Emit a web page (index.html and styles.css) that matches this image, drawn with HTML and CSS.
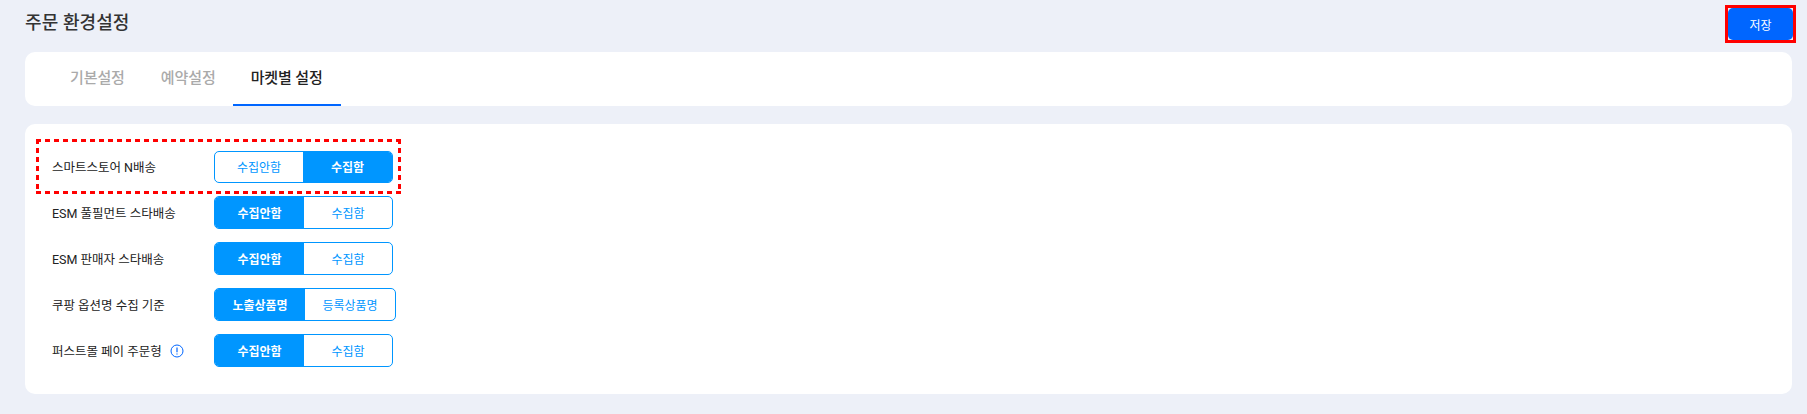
FILE: index.html
```html
<!DOCTYPE html>
<html>
<head>
    <title>주문 환경설정</title>
    <link rel="stylesheet" href="styles.css">
</head>
<body>
    <div class="page-head">
        <h1>주문 환경설정</h1>
        <div class="save-outline">
            <button class="button save">저장</button>
        </div>
    </div>
    <div class="card tabs">
        <a class="tab">기본설정</a>
        <a class="tab">예약설정</a>
        <a class="tab active">마켓별 설정</a>
    </div>
    <div class="card settings">
        <div class="row row-marked">
            <div class="row-label">스마트스토어 N배송</div>
            <div class="toggle first-on-right">
                <span class="opt">수집안함</span>
                <span class="opt on">수집함</span>
            </div>
        </div>
        <div class="row">
            <div class="row-label">ESM 풀필먼트 스타배송</div>
            <div class="toggle">
                <span class="opt on">수집안함</span>
                <span class="opt">수집함</span>
            </div>
        </div>
        <div class="row">
            <div class="row-label">ESM 판매자 스타배송</div>
            <div class="toggle">
                <span class="opt on">수집안함</span>
                <span class="opt">수집함</span>
            </div>
        </div>
        <div class="row">
            <div class="row-label">쿠팡 옵션명 수집 기준</div>
            <div class="toggle wide">
                <span class="opt on">노출상품명</span>
                <span class="opt">등록상품명</span>
            </div>
        </div>
        <div class="row">
            <div class="row-label">퍼스트몰 페이 주문형
                <svg class="info" width="14" height="14" viewBox="0 0 14 14">
                    <circle cx="7" cy="7" r="6" fill="none" stroke="#0066ff" stroke-width="1"/>
                    <path d="M7 3.6v4.6M7 9.4v1.1" fill="none" stroke="#0066ff" stroke-width="1.2"/>
                </svg>
            </div>
            <div class="toggle">
                <span class="opt on">수집안함</span>
                <span class="opt">수집함</span>
            </div>
        </div>
    </div>
</body>
</html>
```

FILE: styles.css
```css
body {
    font-family: Roboto, "Noto Sans CJK KR", sans-serif;
    margin: 0;
    height: 414px;
    overflow: hidden;
    background-color: #edf0f8;
    color: #222;
}
.page-head {
    display: flex;
    justify-content: space-between;
    align-items: flex-start;
    box-sizing: border-box;
    height: 52px;
    padding: 5px 11px 0 25px;
}
h1 {
    margin: 4px 0 0;
    font-size: 18px;
    font-weight: 500;
    line-height: 28px;
    letter-spacing: 0.1px;
    color: #333;
}
.save-outline {
    border: 3px solid #ff0000;
    line-height: 0;
}
.button {
    width: 65px;
    height: 32px;
    border: none;
    border-radius: 5px;
    font-family: inherit;
    font-size: 12px;
    cursor: pointer;
}
.save {
    background-color: #0066ff;
    color: white;
}
.card {
    background-color: white;
    border-radius: 10px;
    margin: 0 15px 0 25px;
}
.tabs {
    display: flex;
    height: 54px;
    padding-left: 45px;
    margin-bottom: 18px;
    box-sizing: border-box;
}
.tab {
    font-size: 15px;
    font-weight: 500;
    line-height: 52px;
    letter-spacing: -0.1px;
    color: #aaa;
    margin-right: 36px;
}
.tab.active {
    color: #222;
    margin-left: -19px;
    padding: 0 18px;
    border-bottom: 2px solid #0066ff;
    height: 52px;
}
.settings {
    height: 270px;
    padding-top: 15px;
    box-sizing: border-box;
}
.row {
    display: flex;
    align-items: center;
    height: 33px;
    margin: 0 0 13px 27px;
    font-size: 12.5px;
}
.row-marked {
    width: 365px;
    height: 55px;
    margin: 0 0 2px 11px;
    padding-left: 16px;
    box-sizing: border-box;
    background-image:
        repeating-linear-gradient(90deg, #ff0000 0 5px, transparent 5px 9px),
        repeating-linear-gradient(90deg, #ff0000 0 5px, transparent 5px 9px),
        repeating-linear-gradient(180deg, #ff0000 0 5px, transparent 5px 9px),
        repeating-linear-gradient(180deg, #ff0000 0 5px, transparent 5px 9px);
    background-size: 100% 3px, 100% 3px, 3px 100%, 3px 100%;
    background-position: 0 0, 0 100%, 0 0, 100% 0;
    background-repeat: no-repeat;
}
.row-label {
    width: 162px;
    display: flex;
    align-items: center;
    gap: 8px;
}
.info {
    flex: none;
}
.toggle {
    display: grid;
    grid-template-columns: 89px 88px;
    width: 179px;
    height: 33px;
    box-sizing: border-box;
    border: 1px solid #0096ff;
    border-radius: 5px;
    overflow: hidden;
    font-size: 12px;
}
.row-marked .toggle {
    height: 32px;
}
.first-on-right {
    grid-template-columns: 88px 89px;
}
.toggle.wide {
    width: 182px;
    grid-template-columns: 90px 90px;
}
.opt {
    display: flex;
    align-items: center;
    justify-content: center;
    color: #0096ff;
}
.opt.on {
    background-color: #0096ff;
    color: white;
    font-weight: 700;
}
```
